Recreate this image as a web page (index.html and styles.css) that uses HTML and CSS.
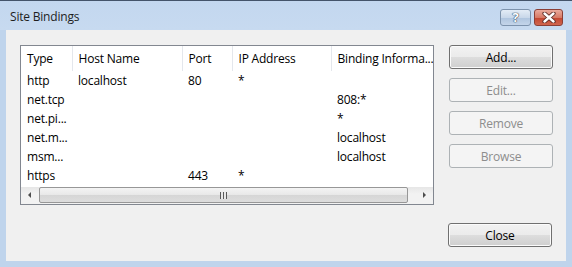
FILE: index.html
```html
<!DOCTYPE html>
<html lang="en">
<head>
    <meta charset="UTF-8">
    <title>Site Bindings</title>
    <link rel="stylesheet" href="styles.css">
</head>
<body>
    <div class="window">
        <div class="titlebar">
            <span class="title">Site Bindings</span>
            <div class="caption-buttons">
                <div class="cap help">?</div>
                <div class="cap close">
                    <svg width="16" height="11" viewBox="0 0 16 11">
                        <path d="M3.5 1.5 L12.5 9.5 M12.5 1.5 L3.5 9.5" stroke="#5a2a24" stroke-width="4.2" stroke-linecap="round"/>
                        <path d="M3.5 1.5 L12.5 9.5 M12.5 1.5 L3.5 9.5" stroke="#fff" stroke-width="2.4" stroke-linecap="round"/>
                    </svg>
                </div>
            </div>
        </div>
        <div class="client">
            <div class="listview">
                <table class="bindings">
                    <colgroup>
                        <col style="width: 51px">
                        <col style="width: 110px">
                        <col style="width: 50px">
                        <col style="width: 99px">
                        <col>
                    </colgroup>
                    <thead>
                        <tr>
                            <th>Type</th>
                            <th>Host Name</th>
                            <th>Port</th>
                            <th>IP Address</th>
                            <th>Binding Informa...</th>
                        </tr>
                    </thead>
                    <tbody>
                        <tr><td>http</td><td>localhost</td><td>80</td><td>*</td><td></td></tr>
                        <tr><td>net.tcp</td><td></td><td></td><td></td><td>808:*</td></tr>
                        <tr><td>net.pi...</td><td></td><td></td><td></td><td>*</td></tr>
                        <tr><td>net.m...</td><td></td><td></td><td></td><td>localhost</td></tr>
                        <tr><td>msm...</td><td></td><td></td><td></td><td>localhost</td></tr>
                        <tr><td>https</td><td></td><td>443</td><td>*</td><td></td></tr>
                    </tbody>
                </table>
                <div class="hscroll">
                    <div class="arrow left"></div>
                    <div class="thumb"><span class="grip"></span></div>
                    <div class="arrow right"></div>
                </div>
            </div>
            <div class="actions">
                <button class="btn">Add...</button>
                <button class="btn" disabled>Edit...</button>
                <button class="btn" disabled>Remove</button>
                <button class="btn" disabled>Browse</button>
            </div>
            <div class="footer">
                <button class="btn">Close</button>
            </div>
        </div>
    </div>
</body>
</html>
```

FILE: styles.css
```css
body {
    margin: 0;
    font-family: "Open Sans", "Noto Sans", sans-serif;
    font-size: 12px;
    letter-spacing: -0.2px;
    color: #000;
    background: #bed3eb;
}
.window {
    width: 572px;
    height: 267px;
    box-sizing: border-box;
    border-top: 1px solid #44546a;
    background: #bfd4ec;
    display: flex;
    flex-direction: column;
}
.titlebar {
    height: 29px;
    display: flex;
    align-items: center;
    justify-content: space-between;
    padding: 0 9px 0 10px;
    background: linear-gradient(#c3d7ef, #c7daf0);
}
.title {
    margin-top: 2px;
    color: #1e1e1e;
}
.caption-buttons {
    display: flex;
    gap: 3px;
    margin-top: 3px;
}
.cap {
    height: 15px;
    border-radius: 3px;
    display: flex;
    align-items: center;
    justify-content: center;
}
.help {
    width: 29px;
    border: 1px solid #7d93ad;
    background: linear-gradient(#e3ecf6, #c9d8ea 50%, #aec4de 51%, #c4d5ea);
    color: #fff;
    font-size: 13px;
    font-weight: bold;
    line-height: 15px;
    text-shadow: 0 0 1px #33485f, 0 0 1px #33485f, 0 0 1px #33485f;
}
.close {
    width: 27px;
    border: 1px solid #8b3f36;
    background: linear-gradient(#eaaa9c, #d77a66 50%, #c3452f 51%, #d0664e);
}
.client {
    flex: 1;
    margin: 0 6px 6px;
    background: #f0f0f0;
    display: grid;
    grid-template-columns: 414px 104px;
    grid-template-rows: 160px 1fr;
    column-gap: 15px;
    padding: 15px 13px 14px 14px;
}
.listview {
    border: 1px solid #828790;
    background: #fff;
    display: flex;
    flex-direction: column;
}
.bindings {
    width: 412px;
    table-layout: fixed;
    border-collapse: collapse;
}
.bindings th {
    height: 25px;
    padding: 0 0 0 6px;
    font-weight: normal;
    text-align: left;
    border-left: 1px solid #e4e7ec;
    white-space: nowrap;
    overflow: hidden;
}
.bindings th:first-child {
    border-left: none;
}
.bindings td {
    height: 19px;
    padding: 0 0 0 6px;
    white-space: nowrap;
    overflow: hidden;
}
.hscroll {
    height: 17px;
    display: flex;
    background: linear-gradient(#e6e6e6, #f2f2f2 40%, #f2f2f2);
    margin-top: auto;
}
.arrow {
    width: 17px;
    position: relative;
}
.arrow.right {
    margin-left: 8px;
}
.arrow::after {
    content: "";
    position: absolute;
    top: 5px;
    left: 7px;
    border-top: 3px solid transparent;
    border-bottom: 3px solid transparent;
}
.arrow.left::after {
    border-right: 3px solid #4d4d4d;
}
.arrow.right::after {
    border-left: 3px solid #4d4d4d;
}
.thumb {
    flex: 1;
    margin: 0 0 1px 1px;
    border: 1px solid #979797;
    border-radius: 2px;
    background: linear-gradient(#f4f4f4, #e8e8e8 50%, #d6d6d6 51%, #dddddd);
    display: flex;
    align-items: center;
    justify-content: center;
}
.grip {
    width: 7px;
    height: 7px;
    background: repeating-linear-gradient(90deg, #5a5a5a 0 1px, #e8e8e8 1px 3px);
}
.actions {
    display: flex;
    flex-direction: column;
    gap: 9px;
}
.btn {
    height: 24px;
    width: 104px;
    font: inherit;
    letter-spacing: inherit;
    color: #000;
    border: 1px solid #707070;
    border-radius: 3px;
    background: linear-gradient(#f2f2f2, #ebebeb 50%, #dddddd 51%, #cfcfcf);
    box-shadow: inset 0 0 0 1px #fbfbfb;
    padding: 0;
}
.btn:disabled {
    color: #8d8d8d;
    border-color: #adb2b5;
    background: #f4f4f4;
    box-shadow: none;
}
.footer {
    grid-column: 2;
    align-self: end;
    margin-left: -1px;
}
```
